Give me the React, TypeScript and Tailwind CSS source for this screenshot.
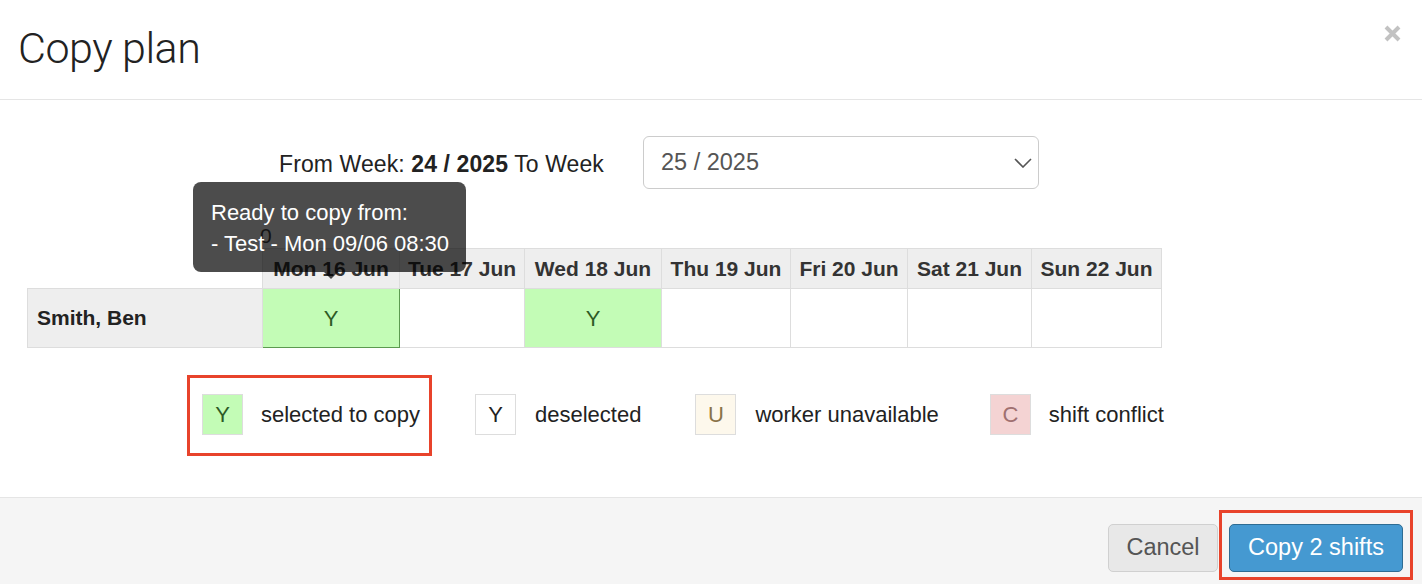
import React from 'react';

const days = [
  { label: 'Mon 16 Jun', w: 'w-[137px]' },
  { label: 'Tue 17 Jun', w: 'w-[125px]' },
  { label: 'Wed 18 Jun', w: 'w-[137px]' },
  { label: 'Thu 19 Jun', w: 'w-[129px]' },
  { label: 'Fri 20 Jun', w: 'w-[117px]' },
  { label: 'Sat 21 Jun', w: 'w-[124px]' },
  { label: 'Sun 22 Jun', w: 'w-[130px]' },
];

const App: React.FC = () => {
  return (
    <div className="w-[1422px] h-[584px] bg-white text-[#333] font-['Liberation_Sans',Arial,sans-serif] overflow-hidden">
      {/* header */}
      <header className="h-[100px] border-b border-[#e5e5e5] flex items-start justify-between pl-[18px] pr-[21px]">
        <h1 className="mt-[22px] text-[43px] leading-[52px] font-light tracking-[-0.5px] text-[#222] font-['Roboto',sans-serif]">
          Copy plan
        </h1>
        <button className="mt-[25px]">
          <svg width="17" height="17" viewBox="0 0 17 17">
            <path d="M2 2 L15 15 M15 2 L2 15" stroke="#c2c2c2" strokeWidth="4" />
          </svg>
        </button>
      </header>

      {/* body */}
      <div className="h-[397px] pt-[36px] text-[22px]">
        <div className="flex items-center pl-[279px] text-[23px] text-[#222]">
          <span className="mt-[3px] tracking-[0.1px]">
            From Week: <b>24 / 2025</b> To Week
          </span>
          <div className="ml-[39px] w-[396px] h-[53px] border border-[#ccc] rounded-[6px] flex items-center justify-between pl-[17px] pr-[6px] text-[23.5px] text-[#555]">
            <span className="mt-[1px]">25 / 2025</span>
            <svg width="18" height="10" viewBox="0 0 18 10">
              <path d="M1 1 L9 9 L17 1" fill="none" stroke="#555" strokeWidth="1.6" />
            </svg>
          </div>
        </div>

        <div className="relative">
          <div className="h-[59px] flex items-end pl-[260px] text-[21px] leading-[24px] text-[#444]">0</div>

          {/* tooltip */}
          <div className="absolute left-[193px] top-[-7px] w-[273px] z-10">
            <div className="bg-black/70 text-white rounded-[8px] px-[18px] pt-[15px] pb-[13px] text-[22px] leading-[31px] whitespace-nowrap">
              <div>Ready to copy from:</div>
              <div>- Test - Mon 09/06 08:30</div>
            </div>
            <div className="ml-[131px] w-0 h-0 border-l-[7px] border-r-[7px] border-t-[7px] border-l-transparent border-r-transparent border-t-black/70" />
          </div>

          <table className="ml-[27px] border-collapse">
            <thead>
              <tr className="h-[40px]">
                <th className="w-[235px] p-0" />
                {days.map((d) => (
                  <th key={d.label} className={`${d.w} p-0 bg-[#eee] border border-[#ddd] font-bold text-[21px] text-[#333] whitespace-nowrap`}>
                    {d.label}
                  </th>
                ))}
              </tr>
            </thead>
            <tbody>
              <tr className="h-[59px]">
                <td className="bg-[#eee] border border-[#ddd] pl-[9px] font-bold text-[21px] text-[#222]">Smith, Ben</td>
                <td className="bg-[#c3fcb6] border border-[#5c9a50] text-center text-[#2d5a25]">Y</td>
                <td className="border border-[#ddd]" />
                <td className="bg-[#c3fcb6] border border-[#ddd] text-center text-[#2d5a25]">Y</td>
                <td className="border border-[#ddd]" />
                <td className="border border-[#ddd]" />
                <td className="border border-[#ddd]" />
                <td className="border border-[#ddd]" />
              </tr>
            </tbody>
          </table>
        </div>

        {/* legend */}
        <div className="relative mt-[46px] flex items-center pl-[202px] text-[22px] text-[#222] whitespace-nowrap">
          <div className="absolute left-[187px] top-[-19px] w-[245px] h-[81px] border-[3px] border-[#e8432b]" />
          <div className="w-[41px] h-[41px] bg-[#c3fcb6] border border-[#ddd] flex items-center justify-center text-[#2d5a25]">Y</div>
          <span className="ml-[18px]">selected to copy</span>
          <div className="ml-[55px] w-[41px] h-[41px] bg-white border border-[#ddd] flex items-center justify-center">Y</div>
          <span className="ml-[19px]">deselected</span>
          <div className="ml-[54px] w-[41px] h-[41px] bg-[#fdf8ec] border border-[#ddd] flex items-center justify-center text-[#8a7348]">U</div>
          <span className="ml-[19px]">worker unavailable</span>
          <div className="ml-[51px] w-[41px] h-[41px] bg-[#f4d3d3] border border-[#ddd] flex items-center justify-center text-[#a07070]">C</div>
          <span className="ml-[18px]">shift conflict</span>
        </div>
      </div>

      {/* footer */}
      <footer className="relative h-[87px] border-t border-[#e5e5e5] bg-[#f5f5f5] flex items-start justify-end pt-[26px] pr-[19px] text-[23.5px]">
        <button className="w-[110px] h-[48px] rounded-[5px] bg-[#e8e8e8] border border-[#d0d0d0] text-[#555]">Cancel</button>
        <button className="ml-[11px] w-[174px] h-[48px] rounded-[5px] bg-[#4599d1] border border-[#2e6c93] text-white">Copy 2 shifts</button>
        <div className="absolute left-[1219px] top-[12px] w-[194px] h-[70px] border-[3px] border-[#e8432b]" />
      </footer>
    </div>
  );
};

export default App;
